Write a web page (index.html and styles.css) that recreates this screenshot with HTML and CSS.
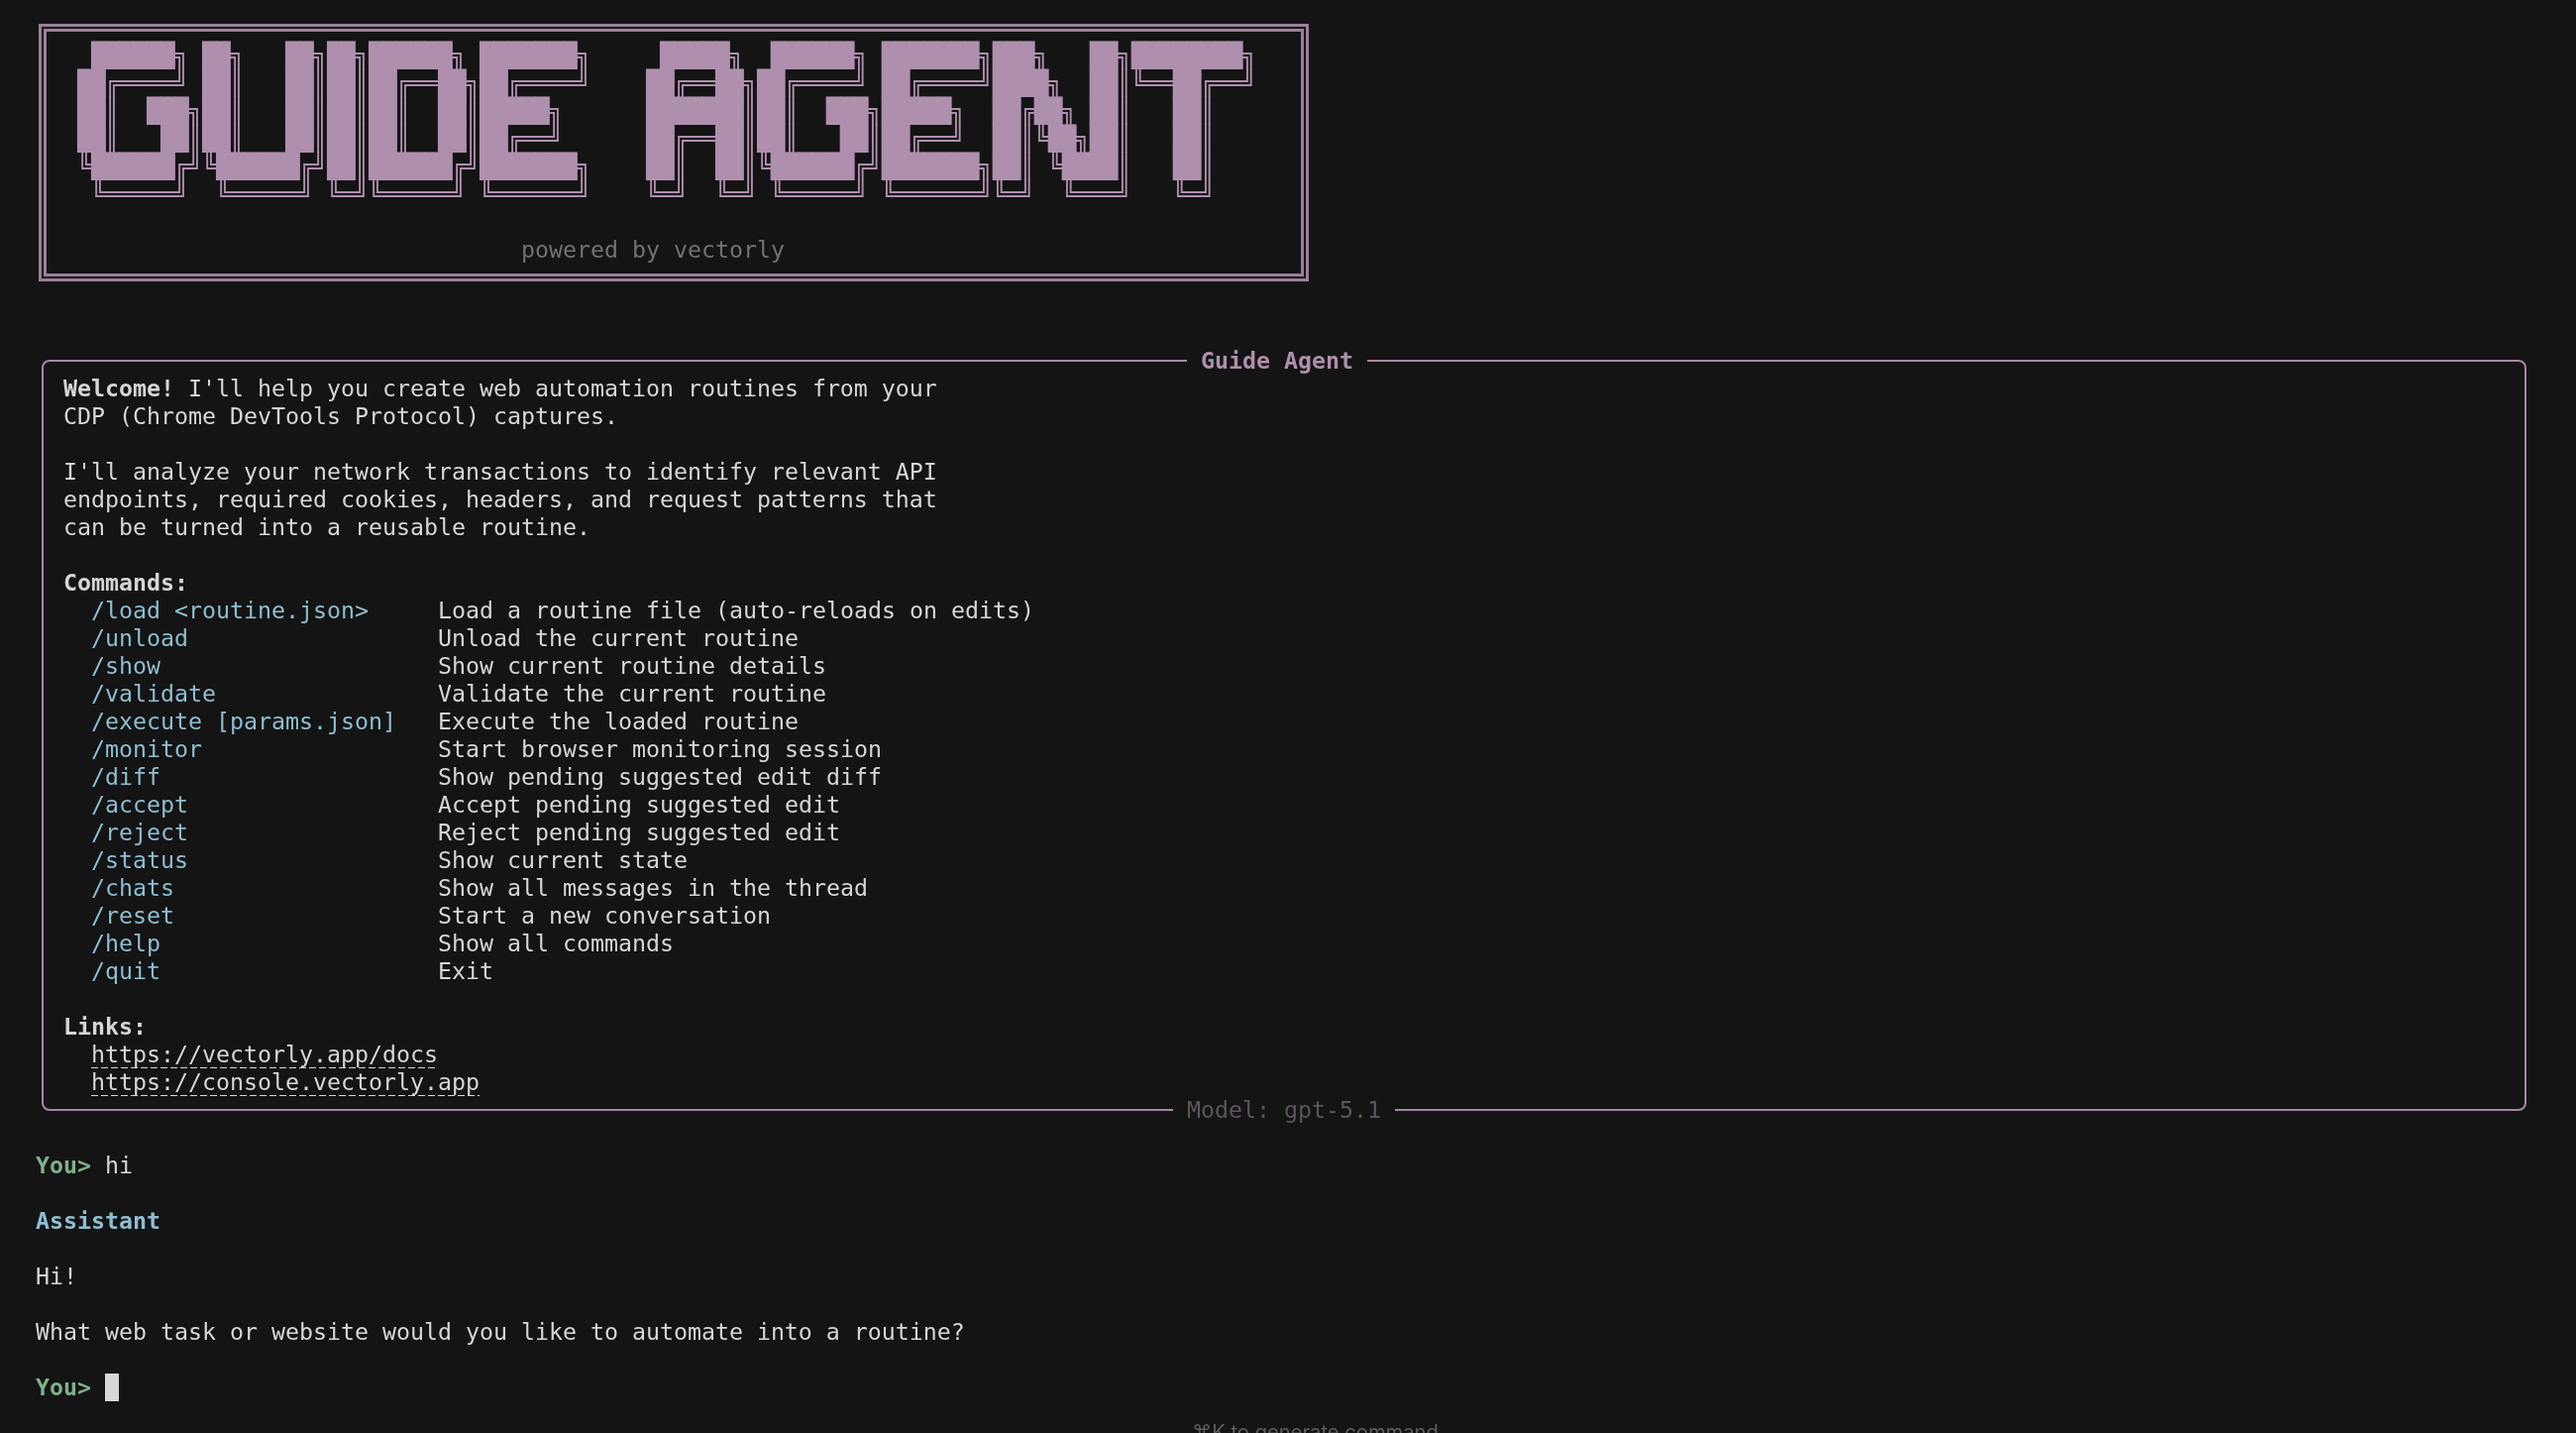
FILE: index.html
```html
<!DOCTYPE html>
<html lang="en">
<head>
<meta charset="utf-8">
<title>Guide Agent</title>
<link rel="stylesheet" href="styles.css">
</head>
<body>
<main class="term">
<header class="banner">
<pre class="banner-art"> ██████╗ ██╗   ██╗██╗██████╗ ███████╗     █████╗  ██████╗ ███████╗███╗   ██╗████████╗
██╔════╝ ██║   ██║██║██╔══██╗██╔════╝    ██╔══██╗██╔════╝ ██╔════╝████╗  ██║╚══██╔══╝
██║  ███╗██║   ██║██║██║  ██║█████╗      ███████║██║  ███╗█████╗  ██╔██╗ ██║   ██║
██║   ██║██║   ██║██║██║  ██║██╔══╝      ██╔══██║██║   ██║██╔══╝  ██║╚██╗██║   ██║
╚██████╔╝╚██████╔╝██║██████╔╝███████╗    ██║  ██║╚██████╔╝███████╗██║ ╚████║   ██║
 ╚═════╝  ╚═════╝ ╚═╝╚═════╝ ╚══════╝    ╚═╝  ╚═╝ ╚═════╝ ╚══════╝╚═╝  ╚═══╝   ╚═╝</pre>
<div class="powered">powered by vectorly</div>
</header>

<section class="panel">
  <h1 class="panel-title">Guide Agent</h1>
  <p class="para"><b>Welcome!</b> I'll help you create web automation routines from your<br>CDP (Chrome DevTools Protocol) captures.</p>
  <p class="para">I'll analyze your network transactions to identify relevant API<br>endpoints, required cookies, headers, and request patterns that<br>can be turned into a reusable routine.</p>
  <h2 class="head">Commands:</h2>
  <dl class="cmds">
    <dt>/load &lt;routine.json&gt;</dt><dd>Load a routine file (auto-reloads on edits)</dd>
    <dt>/unload</dt><dd>Unload the current routine</dd>
    <dt>/show</dt><dd>Show current routine details</dd>
    <dt>/validate</dt><dd>Validate the current routine</dd>
    <dt>/execute [params.json]</dt><dd>Execute the loaded routine</dd>
    <dt>/monitor</dt><dd>Start browser monitoring session</dd>
    <dt>/diff</dt><dd>Show pending suggested edit diff</dd>
    <dt>/accept</dt><dd>Accept pending suggested edit</dd>
    <dt>/reject</dt><dd>Reject pending suggested edit</dd>
    <dt>/status</dt><dd>Show current state</dd>
    <dt>/chats</dt><dd>Show all messages in the thread</dd>
    <dt>/reset</dt><dd>Start a new conversation</dd>
    <dt>/help</dt><dd>Show all commands</dd>
    <dt>/quit</dt><dd>Exit</dd>
  </dl>
  <h2 class="head">Links:</h2>
  <ul class="links">
    <li><a class="link" href="#docs">https://vectorly.app/docs</a></li>
    <li><a class="link" href="#console">https://console.vectorly.app</a></li>
  </ul>
  <div class="panel-model">Model: gpt-5.1</div>
</section>

<section class="chat">
  <p class="msg"><b class="you">You&gt;</b> hi</p>
  <p class="msg"><b class="assistant">Assistant</b></p>
  <p class="msg">Hi!</p>
  <p class="msg">What web task or website would you like to automate into a routine?</p>
  <p class="msg prompt"><b class="you">You&gt;</b> <span class="cursor"></span></p>
</section>
</main>
<div class="hint">⌘K to generate command</div>
</body>
</html>
```

FILE: styles.css
```css
html, body {
  margin: 0;
  height: 100%;
  background: #141414;
  overflow: hidden;
}
body {
  position: relative;
  color: #d6d6d6;
  font-family: "DejaVu Sans Mono", monospace;
  font-size: 23.25px;
  line-height: 28px;
  will-change: transform;
}
.term {
  padding: 24px 0 0 36px;
}
.banner {
  box-sizing: border-box;
  width: 1282px;
  margin-left: 3px;
  padding: 10px 0 10px 31px;
  border: 8px double #9c7f9a;
}
.banner-art {
  margin: 0;
  color: #af8fae;
  font-family: "DejaVu Sans Mono", monospace;
  font-size: 24.05px;
  letter-spacing: -0.48px;
  line-height: 28px;
}
.powered {
  margin: 28px 0 0 448px;
  color: #727272;
}
.panel {
  position: relative;
  box-sizing: border-box;
  width: 2508px;
  margin: 79px 0 13px 6px;
  padding: 13px 20px;
  border: 2px solid #a587a3;
  border-radius: 8px;
}
.panel-title {
  position: absolute;
  top: -15px;
  left: 1154px;
  margin: 0;
  padding: 0 14px;
  background: #141414;
  color: #af8fae;
  font-size: inherit;
  line-height: 28px;
  font-weight: 700;
}
.panel-model {
  position: absolute;
  bottom: -15px;
  left: 1140px;
  padding: 0 14px;
  background: #141414;
  color: #5e5260;
}
.para {
  margin: 0 0 28px;
}
.head {
  margin: 0;
  font-size: inherit;
  font-weight: 700;
}
.cmds {
  display: grid;
  grid-template-columns: 350px 1fr;
  margin: 0 0 28px;
  padding-left: 28px;
}
.cmds dt {
  color: #8fbdd1;
}
.cmds dd {
  margin: 0;
}
.links {
  margin: 0;
  padding: 0 0 0 28px;
  list-style: none;
}
.link {
  display: inline-block;
  color: inherit;
  text-decoration: none;
  background: repeating-linear-gradient(90deg, #d6d6d6 0 7px, transparent 7px 10px) left bottom 0 / 100% 1px no-repeat;
}
.chat {
  padding-top: 28px;
}
.msg {
  margin: 0 0 28px;
}
.prompt {
  margin: 0;
}
.you {
  color: #7fb08b;
}
.assistant {
  color: #8fbdd1;
}
.cursor {
  display: inline-block;
  width: 14px;
  height: 28px;
  background: #d6d6d6;
  vertical-align: top;
}
.hint {
  position: absolute;
  top: 1432px;
  left: 1203px;
  color: #5e5e5e;
  font-family: Inter, "DejaVu Sans", sans-serif;
  font-size: 20.2px;
  line-height: 26px;
  white-space: nowrap;
}
```
